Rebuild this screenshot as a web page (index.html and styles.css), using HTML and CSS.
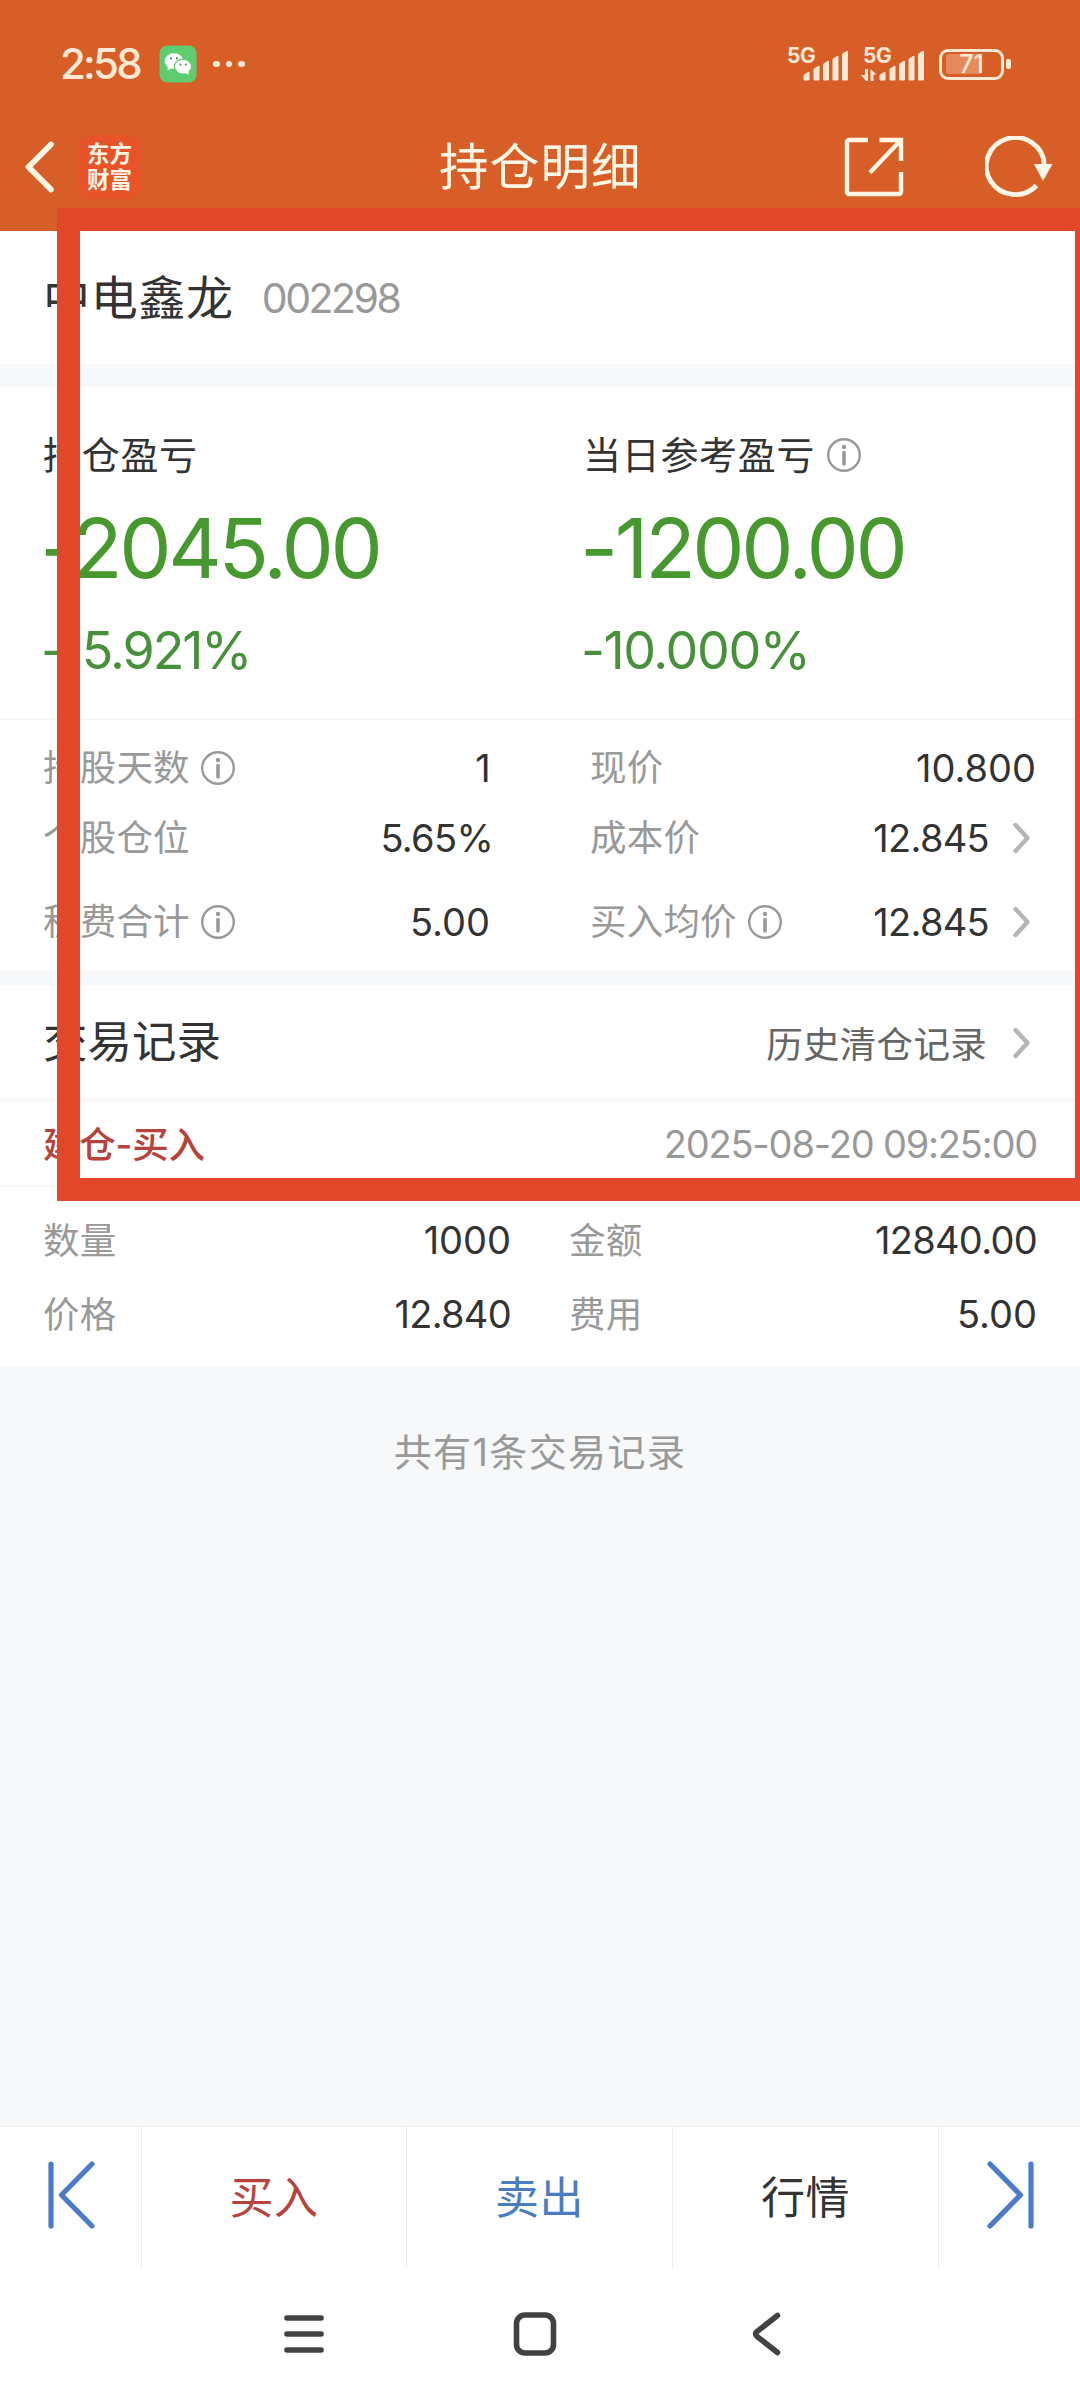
FILE: index.html
```html
<!DOCTYPE html>
<html lang="zh-CN">

<head>
  <meta charset="UTF-8">
  <title>持仓明细</title>
  <link rel="stylesheet" href="styles.css">
</head>

<body>
  <!-- shared icons -->
  <svg class="sprite" width="0" height="0">
    <symbol id="info" viewBox="0 0 36 36">
      <circle cx="18" cy="18" r="15.8" fill="none" stroke="#999" stroke-width="2.4" />
      <circle cx="18" cy="10" r="2.2" fill="#999" />
      <path d="M18 15.5V27" stroke="#999" stroke-width="3.6" stroke-linecap="round" />
    </symbol>
    <symbol id="more" viewBox="0 0 18 32">
      <path d="M2.5 3L14.5 16L2.5 29" fill="none" stroke="#b5b5b5" stroke-width="4.4" stroke-linecap="round" stroke-linejoin="round" />
    </symbol>
    <symbol id="signal" viewBox="0 0 46 30">
      <path d="M1 29v-5l5-3v8zM11 29V18l5-3v14zM20.5 29V13l5-3v19zM30 29V8l5-3v24zM39.5 29V3l5-3v29z" fill="#fde8d3" stroke="#fde8d3" stroke-width="1" stroke-linejoin="round" />
    </symbol>
  </svg>

  <header class="header">
    <div class="status">
      <span class="time">2:58</span>
      <svg class="wechat" viewBox="0 0 38 38">
        <rect x="0.5" y="0.5" width="37" height="37" rx="8" fill="#5fcc72" />
        <ellipse cx="15" cy="16" rx="9.3" ry="7.8" fill="#fff" />
        <path d="M9 21l-.6 4.2 5-2.2z" fill="#fff" />
        <ellipse cx="24" cy="21.6" rx="8.6" ry="7.4" fill="#fff" stroke="#5fcc72" stroke-width="1.2" />
        <path d="M25 28l5 1.5-1-3.5z" fill="#fff" />
        <g fill="#3f8f4e">
          <circle cx="12" cy="13.4" r="1.1" />
          <circle cx="18" cy="13.4" r="1.1" />
          <circle cx="21.4" cy="19.5" r="1" />
          <circle cx="26.8" cy="19.5" r="1" />
        </g>
      </svg>
      <div class="dots"><i></i><i></i><i></i></div>
      <div class="sim">
        <span class="net">5G</span>
        <svg class="bars" viewBox="0 0 46 30"><use href="#signal" /></svg>
      </div>
      <div class="sim">
        <span class="net">5G</span>
        <svg class="updown" viewBox="0 0 16 12">
          <path d="M4 0h3v12h-2L0 6H4zM9.500 12V0l6 5.500h-3V12z" fill="#fde8d3" />
        </svg>
        <svg class="bars" viewBox="0 0 46 30"><use href="#signal" /></svg>
      </div>
      <div class="battery"><span class="charge"></span><b>71</b></div>
      <span class="nub"></span>
    </div>

    <div class="titlebar">
      <svg class="back" viewBox="0 0 32 54">
        <path d="M27 4.5L4.5 27L27 49.5" fill="none" stroke="#fff6e6" stroke-width="5.8" stroke-linecap="round" stroke-linejoin="round" />
      </svg>
      <div class="logo">东方<br>财富</div>
      <h1>持仓明细</h1>
      <svg class="share" viewBox="0 0 60 60">
        <path d="M24 3H5a2 2 0 0 0-2 2v50a2 2 0 0 0 2 2h50a2 2 0 0 0 2-2V35M35.5 3H57v21M56 4L26 35.5" fill="none" stroke="#fff6e6" stroke-width="4.4" />
      </svg>
      <svg class="refresh" viewBox="0 0 68 62">
        <path d="M59.3 29A29 28.5 0 1 0 51.5 49.5" fill="none" stroke="#fff6e6" stroke-width="4.8" />
        <path d="M49 28H67.500L58 45z" fill="#fff6e6" />
      </svg>
    </div>
  </header>

  <section class="stock">
    <h2>中电鑫龙</h2>
    <span class="code">002298</span>
  </section>

  <section class="profit">
    <div class="col">
      <p class="caption">持仓盈亏</p>
      <p class="amount">-2045.00</p>
      <p class="percent">-15.921%</p>
    </div>
    <div class="col">
      <p class="caption">当日参考盈亏 <svg class="info"><use href="#info" /></svg></p>
      <p class="amount">-1200.00</p>
      <p class="percent wide">-10.000%</p>
    </div>
  </section>

  <section class="details">
    <div class="row">
      <div class="cell"><label>持股天数</label><svg class="info"><use href="#info" /></svg><span>1</span></div>
      <div class="cell"><label>现价</label><span class="wide">10.800</span></div>
    </div>
    <div class="row">
      <div class="cell"><label>个股仓位</label><span class="rate">5.65%</span></div>
      <div class="cell"><label>成本价</label><span>12.845</span><svg class="more"><use href="#more" /></svg></div>
    </div>
    <div class="row">
      <div class="cell"><label>税费合计</label><svg class="info"><use href="#info" /></svg><span class="wide">5.00</span></div>
      <div class="cell"><label>买入均价</label><svg class="info"><use href="#info" /></svg><span>12.845</span><svg class="more"><use href="#more" /></svg></div>
    </div>
  </section>

  <section class="records">
    <h3>交易记录</h3>
    <a class="history">历史清仓记录</a>
    <svg class="more"><use href="#more" /></svg>
  </section>

  <section class="record">
    <div class="record-head">
      <span class="type">建仓-买入</span>
      <time>2025-08-20 09:25:00</time>
    </div>
    <div class="record-body">
      <div class="pair"><label>数量</label><span class="wide">1000</span></div>
      <div class="pair"><label>金额</label><span>12840.00</span></div>
      <div class="pair"><label>价格</label><span>12.840</span></div>
      <div class="pair"><label>费用</label><span class="wide">5.00</span></div>
    </div>
  </section>

  <main class="empty">共有1条交易记录</main>

  <footer>
    <nav class="actions">
      <a>
        <svg class="skip" viewBox="0 0 48 70">
          <path d="M4 4V66M45 4L14.500 35L45 66" />
        </svg>
      </a>
      <a class="buy">买入</a>
      <a class="sell">卖出</a>
      <a>行情</a>
      <a>
        <svg class="skip" viewBox="0 0 48 70">
          <path d="M45 4V66M4 4L34.500 35L4 66" />
        </svg>
      </a>
    </nav>
    <div class="keys">
      <svg width="40" height="46" viewBox="0 0 40 46">
        <path d="M3 7H37M3 23H37M3 39H37" />
      </svg>
      <svg width="46" height="46" viewBox="0 0 46 46">
        <rect x="4.500" y="4" width="37" height="38" rx="8.500" />
      </svg>
      <svg width="32" height="46" viewBox="0 0 32 46">
        <path d="M26.500 4.500L6 20.500Q3.500 23 6 25.500L26.500 41.500" />
      </svg>
    </div>
  </footer>

  <!-- highlight drawn over the page -->
  <div class="highlight"></div>
</body>

</html>
```
FILE: styles.css
```css
* {
  box-sizing: border-box;
}

body {
  position: relative;
  display: flex;
  flex-direction: column;
  width: 1080px;
  height: 2400px;
  margin: 0;
  overflow: hidden;
  background: #f6f8fa;
  color: #333;
  font-family: Inter, "Noto Sans CJK SC", sans-serif;
}

h1, h2, h3, p {
  margin: 0;
  font-weight: 400;
}

svg {
  display: block;
  flex: none;
}

.sprite {
  position: absolute;
}

.info {
  width: 36px;
  height: 36px;
}

.more {
  width: 18px;
  height: 32px;
}

/* header */
.header {
  height: 231px;
  background: #d75f27;
  color: #fff6e6;
}

.status {
  display: flex;
  align-items: center;
  height: 103px;
  padding: 25px 69px 0 60px;
  color: #fde8d3;
}

.time {
  width: 99px;
  font-size: 42px;
  font-weight: 500;
  line-height: 50px;
  letter-spacing: -2.8px;
}

.wechat {
  width: 38px;
  height: 38px;
}

.dots {
  display: flex;
  gap: 6px;
  margin: 0 auto 0 16px;
}

.dots i {
  width: 6.6px;
  height: 6.6px;
  border-radius: 50%;
  background: #fde8d3;
}

.sim {
  display: grid;
  grid-template-columns: 16px 46px;
  width: 62px;
  height: 35px;
  margin-right: 14px;
}

.net {
  grid-area: 1 / 1;
  width: 30px;
  font-size: 21px;
  font-weight: 700;
  line-height: 17px;
  letter-spacing: -0.4px;
}

.bars {
  grid-area: 1 / 2;
  width: 46px;
  height: 30px;
  margin-top: 4px;
}

.updown {
  grid-area: 1 / 1;
  width: 16px;
  height: 12px;
  margin: 22px 0 0 -2px;
}

.battery {
  position: relative;
  width: 65px;
  height: 31px;
  border: 3px solid #fde8d3;
  border-radius: 9px;
  text-align: center;
}

.charge {
  position: absolute;
  left: 4px;
  top: 2.5px;
  width: 36px;
  height: 20px;
  border-radius: 3px;
  background: #e38b5b;
}

.battery b {
  position: relative;
  display: block;
  font-size: 25px;
  font-weight: 500;
  line-height: 25px;
}

.nub {
  width: 5px;
  height: 10px;
  margin-left: 2px;
  border-radius: 2px;
  background: #fde8d3;
}

.titlebar {
  display: flex;
  align-items: center;
  height: 128px;
  padding: 0 27px 0 24px;
}

.back {
  width: 32px;
  height: 54px;
}

.logo {
  width: 63px;
  height: 64px;
  margin-left: 22px;
  padding-top: 6px;
  border-radius: 13px;
  background: #e8542a;
  font-size: 22.5px;
  font-weight: 700;
  line-height: 26px;
  text-align: center;
}

.titlebar h1 {
  flex: 1;
  padding-left: 298px;
  font-size: 49.5px;
  line-height: 60px;
  letter-spacing: 1.2px;
}

.share {
  width: 60px;
  height: 60px;
  margin-right: 81px;
}

.refresh {
  width: 68px;
  height: 62px;
}

/* stock name */
.stock {
  display: flex;
  align-items: center;
  height: 133px;
  padding-left: 43px;
  background: #fff;
}

.stock h2 {
  font-size: 47px;
  line-height: 60px;
  letter-spacing: 0.7px;
}

.code {
  margin-left: 28px;
  color: #999;
  font-size: 41px;
  letter-spacing: -2.5px;
}

/* profit */
.profit {
  display: grid;
  grid-template-columns: 540px 540px;
  height: 333px;
  margin-top: 23px;
  padding-top: 43px;
  background: #fff;
  border-bottom: 2px solid #f5f6f7;
}

.col {
  padding-left: 43px;
}

.caption {
  display: flex;
  align-items: center;
  gap: 11px;
  height: 50px;
  font-size: 38px;
  line-height: 50px;
  letter-spacing: 0.7px;
}

.amount {
  height: 80px;
  margin: 28px 0 0 -3px;
  color: #46982f;
  font-size: 83px;
  line-height: 80px;
  letter-spacing: -3.4px;
}

.percent {
  height: 60px;
  margin: 33px 0 0 -2px;
  color: #46913a;
  font-size: 52px;
  line-height: 60px;
  letter-spacing: -2.1px;
}

.percent.wide {
  letter-spacing: -1.4px;
}

/* position details */
.details {
  height: 251px;
  background: #fff;
  padding-top: 22px;
}

.row {
  display: grid;
  grid-template-columns: 447px 446px;
  column-gap: 100px;
  padding-left: 43px;
  height: 50px;
  margin-bottom: 20px;
}

.row:last-child {
  margin-top: 34px;
}

.cell {
  display: flex;
  align-items: center;
  font-size: 38px;
  line-height: 50px;
}

.cell svg.info {
  margin-left: 10px;
}

.cell span {
  margin-left: auto;
  letter-spacing: -0.7px;
}

.cell span.wide,
.pair span.wide {
  letter-spacing: 0;
}

.cell span.rate {
  margin-right: -3px;
}

.cell .more {
  margin: 0 5px 0 24px;
}

label {
  padding-top: 1px;
  color: #999;
  font-size: 36.5px;
  letter-spacing: 0.2px;
}

/* records title */
.records {
  display: flex;
  align-items: center;
  height: 117px;
  margin-top: 14px;
  padding: 0 49px 0 43px;
  background: #fff;
  border-bottom: 4px solid #f6f7f9;
}

.records h3 {
  font-size: 44.5px;
  line-height: 60px;
}

.history {
  margin: 2px 26px 0 auto;
  color: #666;
  font-size: 36.5px;
  letter-spacing: 0.3px;
}

.records .more {
  margin-top: 3px;
}

/* single record */
.record {
  height: 264px;
  background: #fff;
}

.record-head {
  display: flex;
  align-items: center;
  justify-content: space-between;
  height: 85px;
  padding: 0 43px;
  border-bottom: 2px solid #f6f7f9;
}

.type {
  margin-bottom: 3px;
  color: #b5433b;
  font-size: 36.5px;
  font-weight: 500;
  letter-spacing: -0.2px;
}

time {
  color: #999;
  font-size: 38px;
  letter-spacing: -1.2px;
}

.record-body {
  display: grid;
  grid-template-columns: 468px 468px;
  column-gap: 58px;
  row-gap: 23px;
  padding: 28px 0 0 43px;
}

.pair {
  display: flex;
  justify-content: space-between;
  font-size: 38px;
  line-height: 50px;
}

.pair span {
  letter-spacing: -0.7px;
}

.empty {
  flex: 1;
  padding-top: 61px;
  color: #999;
  font-size: 38px;
  line-height: 50px;
  letter-spacing: 1.4px;
  text-align: center;
}

/* bottom */
.actions {
  display: grid;
  grid-template-columns: 142px 265px 266px 266px 141px;
  height: 141px;
  background: #fff;
  border-top: 1px solid #ebecee;
}

.actions a {
  display: flex;
  align-items: center;
  justify-content: center;
  padding-bottom: 4px;
  border-right: 1px solid #ebecee;
  font-size: 44px;
  letter-spacing: 0.6px;
}

.actions a:last-child {
  border-right: 0;
}

.actions .buy {
  color: #b9423a;
}

.actions .sell {
  color: #4a7cc4;
}

.skip {
  width: 48px;
  height: 70px;
}

.skip path {
  fill: none;
  stroke: #4c7cc9;
  stroke-width: 5.2;
  stroke-linecap: round;
  stroke-linejoin: round;
}

.keys {
  display: grid;
  grid-template-columns: 228px 239px 32px;
  align-items: center;
  height: 133px;
  padding-left: 284px;
  background: #fff;
}

.keys path,
.keys rect {
  fill: none;
  stroke: #424242;
  stroke-width: 5.6;
  stroke-linecap: round;
}

/* runs past the right edge of the screen */
.highlight {
  position: absolute;
  left: 57px;
  top: 208px;
  width: 1041px;
  height: 993px;
  border: 23px solid #e2472a;
}
```
